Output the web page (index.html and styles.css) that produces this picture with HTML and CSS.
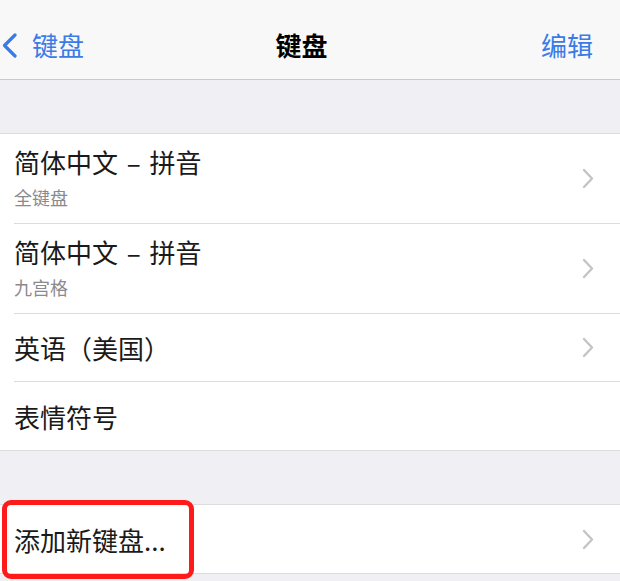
FILE: index.html
```html
<!DOCTYPE html>
<html lang="zh-CN">
<head>
    <meta charset="UTF-8">
    <meta name="viewport" content="width=device-width, initial-scale=1.0">
    <title>键盘</title>
    <link rel="stylesheet" href="styles.css">
</head>
<body>
    <div class="nav">
        <div class="nav-back">
            <svg class="back-icon" width="15" height="25" viewBox="0 0 15 25">
                <path d="M13 2 L2.5 12.5 L13 23" fill="none" stroke="#3a7be6" stroke-width="3.2" stroke-linecap="round" stroke-linejoin="round"/>
            </svg>
            <span>键盘</span>
        </div>
        <div class="nav-title">键盘</div>
        <div class="nav-edit">编辑</div>
    </div>

    <div class="gap"></div>

    <div class="group">
        <div class="row">
            <div class="row-body">
                <div class="row-text">
                    <div class="row-title">简体中文 – 拼音</div>
                    <div class="row-sub">全键盘</div>
                </div>
                <svg class="chevron" width="12" height="21" viewBox="0 0 12 21"><path d="M2 2 L10 10.5 L2 19" fill="none" stroke="#c4c4c8" stroke-width="2.4" stroke-linecap="round" stroke-linejoin="round"/></svg>
            </div>
        </div>
        <div class="row">
            <div class="row-body">
                <div class="row-text">
                    <div class="row-title">简体中文 – 拼音</div>
                    <div class="row-sub">九宫格</div>
                </div>
                <svg class="chevron" width="12" height="21" viewBox="0 0 12 21"><path d="M2 2 L10 10.5 L2 19" fill="none" stroke="#c4c4c8" stroke-width="2.4" stroke-linecap="round" stroke-linejoin="round"/></svg>
            </div>
        </div>
        <div class="row">
            <div class="row-body short">
                <div class="row-title">英语（美国）</div>
                <svg class="chevron" width="12" height="21" viewBox="0 0 12 21"><path d="M2 2 L10 10.5 L2 19" fill="none" stroke="#c4c4c8" stroke-width="2.4" stroke-linecap="round" stroke-linejoin="round"/></svg>
            </div>
        </div>
        <div class="row">
            <div class="row-body short last">
                <div class="row-title">表情符号</div>
            </div>
        </div>
    </div>

    <div class="gap"></div>

    <div class="group group-add">
        <div class="row">
            <div class="row-body short last">
                <div class="row-title">添加新键盘...</div>
                <svg class="chevron" width="12" height="21" viewBox="0 0 12 21"><path d="M2 2 L10 10.5 L2 19" fill="none" stroke="#c4c4c8" stroke-width="2.4" stroke-linecap="round" stroke-linejoin="round"/></svg>
            </div>
        </div>
        <div class="highlight"></div>
    </div>
</body>
</html>
```

FILE: styles.css
```css
html {
    background: #efeff4;
}

body {
    margin: 0;
    min-height: 581px;
    background: #efeff4;
    font-family: "Noto Sans CJK SC", "Noto Sans", sans-serif;
    color: #1a1a1a;
}

.nav {
    height: 68px;
    padding: 11px 27px 0 2px;
    background: #f8f8f8;
    border-bottom: 1px solid #c9c9cc;
    display: grid;
    grid-template-columns: 1fr auto 1fr;
    align-items: center;
    font-size: 26px;
    line-height: 30px;
}

.nav-back {
    display: flex;
    align-items: center;
    color: #3a7be6;
}

.back-icon {
    margin-right: 15px;
}

.nav-title {
    padding-left: 8px;
    font-weight: bold;
    color: #000;
}

.nav-edit {
    justify-self: end;
    color: #3a7be6;
}

.gap {
    height: 53px;
}

.group {
    background: #fff;
    border-top: 1px solid #dcdcdf;
    border-bottom: 1px solid #dcdcdf;
}

.group-add {
    position: relative;
}

.row {
    padding-left: 14px;
}

.row-body {
    height: 90px;
    box-sizing: border-box;
    border-bottom: 1px solid #dcdcdf;
    padding-right: 26px;
    display: flex;
    align-items: center;
    justify-content: space-between;
}

.row-body.short {
    height: 68px;
}

.row-body.last {
    border-bottom: none;
}

.row-text {
    padding-bottom: 5px;
}

.row-title {
    font-size: 26px;
    line-height: 31px;
    word-spacing: 3px;
}

.row-sub {
    margin-top: 10px;
    font-size: 18px;
    line-height: 20px;
    color: #8a8a8e;
}

.highlight {
    position: absolute;
    left: 2px;
    top: -5px;
    width: 182px;
    height: 69px;
    border: 5px solid #ff1a1a;
    border-radius: 9px;
}
```
